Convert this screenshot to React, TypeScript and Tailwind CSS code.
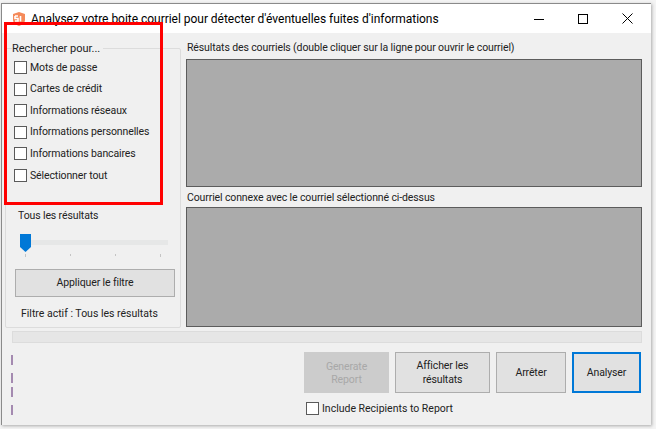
import React from 'react';

const options = [
  'Mots de passe',
  'Cartes de crédit',
  'Informations réseaux',
  'Informations personnelles',
  'Informations bancaires',
  'Sélectionner tout',
];

const CheckBox = ({label}: {label: string}) => (
  <label className="flex items-center gap-[3px] h-[13px]">
    <span className="w-[13px] h-[13px] bg-white border border-[#5a5a5a] flex-none"></span>
    <span className="whitespace-nowrap">{label}</span>
  </label>
);

const AppIcon = () => (
  <svg width="16" height="16" viewBox="0 0 16 16" className="flex-none">
    <path d="M2 3 L8 1 L14 3 L14 9 C14 12 11 14 8 15 C5 14 2 12 2 9 Z" fill="#f58a5a" />
    <path d="M4 5 H7 M4 5 V7.5 H7 V10 H4 M9.5 5 V10.5" stroke="#fff" strokeWidth="1.6" fill="none" />
  </svg>
);

const App = () => {
  return (
    <div className="relative w-[656px] h-[429px] bg-[#f4f4f4] pt-[3px] pl-[1px] pr-[5px] pb-[4px] overflow-hidden font-['Roboto',sans-serif] text-[10.5px] tracking-[-0.12px] text-[#222]">
      <div className="h-full flex flex-col border-l border-t border-[#8a8a8a] bg-[#f0f0f0] shadow-[1px_1px_3px_#aaa]">
        {/* title bar */}
        <div className="h-[29px] flex-none bg-white flex items-center pl-[9px] text-black">
          <AppIcon />
          <span className="ml-[4px] text-[12px] tracking-[-0.03px] whitespace-nowrap">Analysez votre boite courriel pour détecter d'éventuelles fuites d'informations</span>
          <div className="ml-auto flex items-center gap-[34px] pr-[18px]">
            <svg width="10" height="10" viewBox="0 0 10 10"><path d="M0 5.5 H10" stroke="#000" /></svg>
            <svg width="10" height="10" viewBox="0 0 10 10"><rect x="0.5" y="0.5" width="9" height="9" fill="none" stroke="#000" /></svg>
            <svg width="11" height="11" viewBox="0 0 11 11"><path d="M0.5 0.5 L10.5 10.5 M10.5 0.5 L0.5 10.5" stroke="#000" /></svg>
          </div>
        </div>

        <div className="flex-1 flex flex-col pl-[3px] pr-[9px]">
          <div className="flex gap-[5px] pt-[8px] h-[298px] flex-none">
            {/* left filter panel */}
            <fieldset className="w-[176px] flex-none border border-[#dcdcdc] rounded-[2px] h-[287px] pl-[9px] pr-[4px] min-w-0">
              <legend className="relative top-[1px] ml-[-3px] leading-[14px] pr-[3px] text-[11px] tracking-[0px]">Rechercher pour...</legend>
              <div className="flex flex-col gap-[8.6px] pt-[6px] ml-[-1px]">
                {options.map((o) => (
                  <CheckBox key={o} label={o} />
                ))}
              </div>
              <div className="mt-[26px] pl-[3px]">Tous les résultats</div>
              <div className="relative mt-[10px] ml-[5px] h-[26px] w-[150px]">
                <div className="absolute left-[10px] top-[6px] w-[138px] h-[5px] bg-[#e6e7e7]"></div>
                <svg width="11" height="18" viewBox="0 0 11 18" className="absolute left-0 top-0">
                  <path d="M0 0 H11 V13 L5.5 18 L0 13 Z" fill="#0078d7" />
                </svg>
                <div className="absolute top-[20px] left-0 w-[142px] pl-[5px] pr-[1px] flex justify-between">
                  <i className="w-[1px] h-[3px] bg-[#c4c4c4]"></i>
                  <i className="w-[1px] h-[2px] bg-[#c4c4c4]"></i>
                  <i className="w-[1px] h-[2px] bg-[#c4c4c4]"></i>
                  <i className="w-[1px] h-[3px] bg-[#c4c4c4]"></i>
                </div>
              </div>
              <button className="block mt-[9px] w-[160px] h-[28px] bg-[#e1e1e1] border border-[#adadad] text-center">Appliquer le filtre</button>
              <div className="mt-[9px] pl-[6px] whitespace-nowrap tracking-[0px]">Filtre actif : Tous les résultats</div>
            </fieldset>

            {/* results */}
            <div className="flex-1 flex flex-col min-w-0">
              <div className="h-[18px] pl-[1px] leading-[14px] whitespace-nowrap">Résultats des courriels (double cliquer sur la ligne pour ouvrir le courriel)</div>
              <div className="h-[128px] bg-[#ababab] border border-[#5c5c5c]"></div>
              <div className="h-[20px] pl-[1px] pt-[4px] leading-[14px] whitespace-nowrap">Courriel connexe avec le courriel sélectionné ci-dessus</div>
              <div className="h-[120px] bg-[#ababab] border border-[#5c5c5c]"></div>
            </div>
          </div>

          {/* progress bar */}
          <div className="ml-[7px] h-[12px] bg-[#e6e6e6] border border-[#dcdcdc]"></div>

          {/* bottom */}
          <div className="flex flex-1 pt-[9px]">
            <div className="w-[1px] ml-[6px] flex-none flex flex-col pt-[3px] gap-[8px]">
              <i className="block w-[2px] h-[10px] bg-[#a48ab0]"></i>
              <i className="block w-[2px] h-[10px] bg-[#a48ab0]"></i>
              <i className="block w-[2px] h-[10px] bg-[#a48ab0] mt-[-4px]"></i>
              <i className="block w-[2px] h-[10px] bg-[#a48ab0]"></i>
            </div>
            <div className="ml-auto mr-[1px] flex flex-col w-[337px]">
              <div className="flex gap-[6px] h-[41px]">
                <button className="w-[85px] bg-[#cccccc] text-[#a8a8a8] leading-[13px]">Generate<br />Report</button>
                <button className="w-[95px] bg-[#e1e1e1] border border-[#adadad] leading-[14px]">Afficher les<br />résultats</button>
                <button className="w-[70px] bg-[#e1e1e1] border border-[#adadad]">Arrêter</button>
                <button className="w-[69px] bg-[#e1e1e1] border-2 border-[#0078d7]">Analyser</button>
              </div>
              <div className="mt-[9px] ml-[2px] tracking-[0px]">
                <CheckBox label="Include Recipients to Report" />
              </div>
            </div>
          </div>
        </div>
      </div>

      {/* red annotation */}
      <div className="absolute left-[4px] top-[22px] w-[159px] h-[183px] border-[3.5px] border-[#ff0000]"></div>
    </div>
  );
};

export default App;
